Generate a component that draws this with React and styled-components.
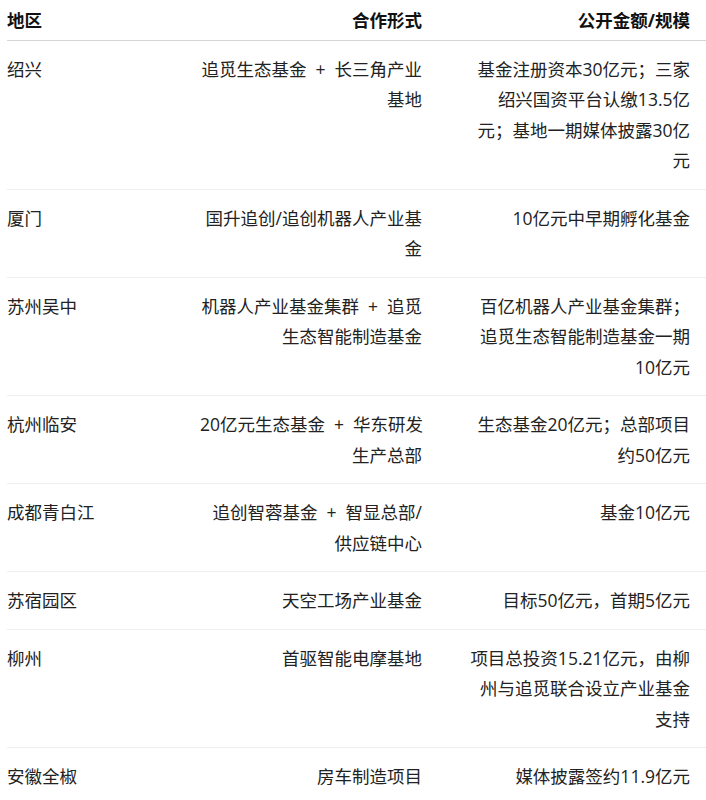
import React from 'react';
import styled, { createGlobalStyle } from 'styled-components';

const GlobalStyle = createGlobalStyle`
  html, body {
    margin: 0;
    padding: 0;
    background: #fff;
  }
  body {
    font-family: "Open Sans", "Noto Sans CJK SC", sans-serif;
    color: #222;
  }
`;

const Wrapper = styled.div`
  width: 706px;
  padding-left: 7px;
  box-sizing: border-box;
`;

const Row = styled.div`
  display: grid;
  grid-template-columns: 1fr 222px 222px;
  column-gap: 46px;
  padding: ${({ head }) => (head ? '5px 16px 4px 0' : '13px 16px 13px 0')};
  border-bottom: 1px solid ${({ head }) => (head ? '#d6d6d6' : '#efefef')};
  font-size: 17.5px;
  line-height: 30.5px;
  font-weight: ${({ head }) => (head ? 700 : 400)};
  color: ${({ head }) => (head ? '#111' : '#222')};
`;

const Cell = styled.div`
  text-align: ${({ align }) => align || 'left'};
`;

const Line = styled.span`
  display: block;
  white-space: nowrap;
  word-spacing: 4.5px;
`;

const rows = [
  {
    area: '绍兴',
    form: ['追觅生态基金 + 长三角产业', '基地'],
    amount: ['基金注册资本30亿元；三家', '绍兴国资平台认缴13.5亿', '元；基地一期媒体披露30亿', '元'],
  },
  {
    area: '厦门',
    form: ['国升追创/追创机器人产业基', '金'],
    amount: ['10亿元中早期孵化基金'],
  },
  {
    area: '苏州吴中',
    form: ['机器人产业基金集群 + 追觅', '生态智能制造基金'],
    amount: ['百亿机器人产业基金集群；', '追觅生态智能制造基金一期', '10亿元'],
  },
  {
    area: '杭州临安',
    form: ['20亿元生态基金 + 华东研发', '生产总部'],
    amount: ['生态基金20亿元；总部项目', '约50亿元'],
  },
  {
    area: '成都青白江',
    form: ['追创智蓉基金 + 智显总部/', '供应链中心'],
    amount: ['基金10亿元'],
  },
  {
    area: '苏宿园区',
    form: ['天空工场产业基金'],
    amount: ['目标50亿元，首期5亿元'],
  },
  {
    area: '柳州',
    form: ['首驱智能电摩基地'],
    amount: ['项目总投资15.21亿元，由柳', '州与追觅联合设立产业基金', '支持'],
  },
  {
    area: '安徽全椒',
    form: ['房车制造项目'],
    amount: ['媒体披露签约11.9亿元'],
  },
];

const Lines = ({ items }) => items.map((t, i) => <Line key={i}>{t}</Line>);

const App = () => {
  return (
    <>
      <GlobalStyle />
      <Wrapper>
        <Row head>
          <Cell>地区</Cell>
          <Cell align="right">合作形式</Cell>
          <Cell align="right">公开金额/规模</Cell>
        </Row>
        {rows.map((row) => (
          <Row key={row.area}>
            <Cell>{row.area}</Cell>
            <Cell align="right">
              <Lines items={row.form} />
            </Cell>
            <Cell align="right">
              <Lines items={row.amount} />
            </Cell>
          </Row>
        ))}
      </Wrapper>
    </>
  );
};

export default App;
